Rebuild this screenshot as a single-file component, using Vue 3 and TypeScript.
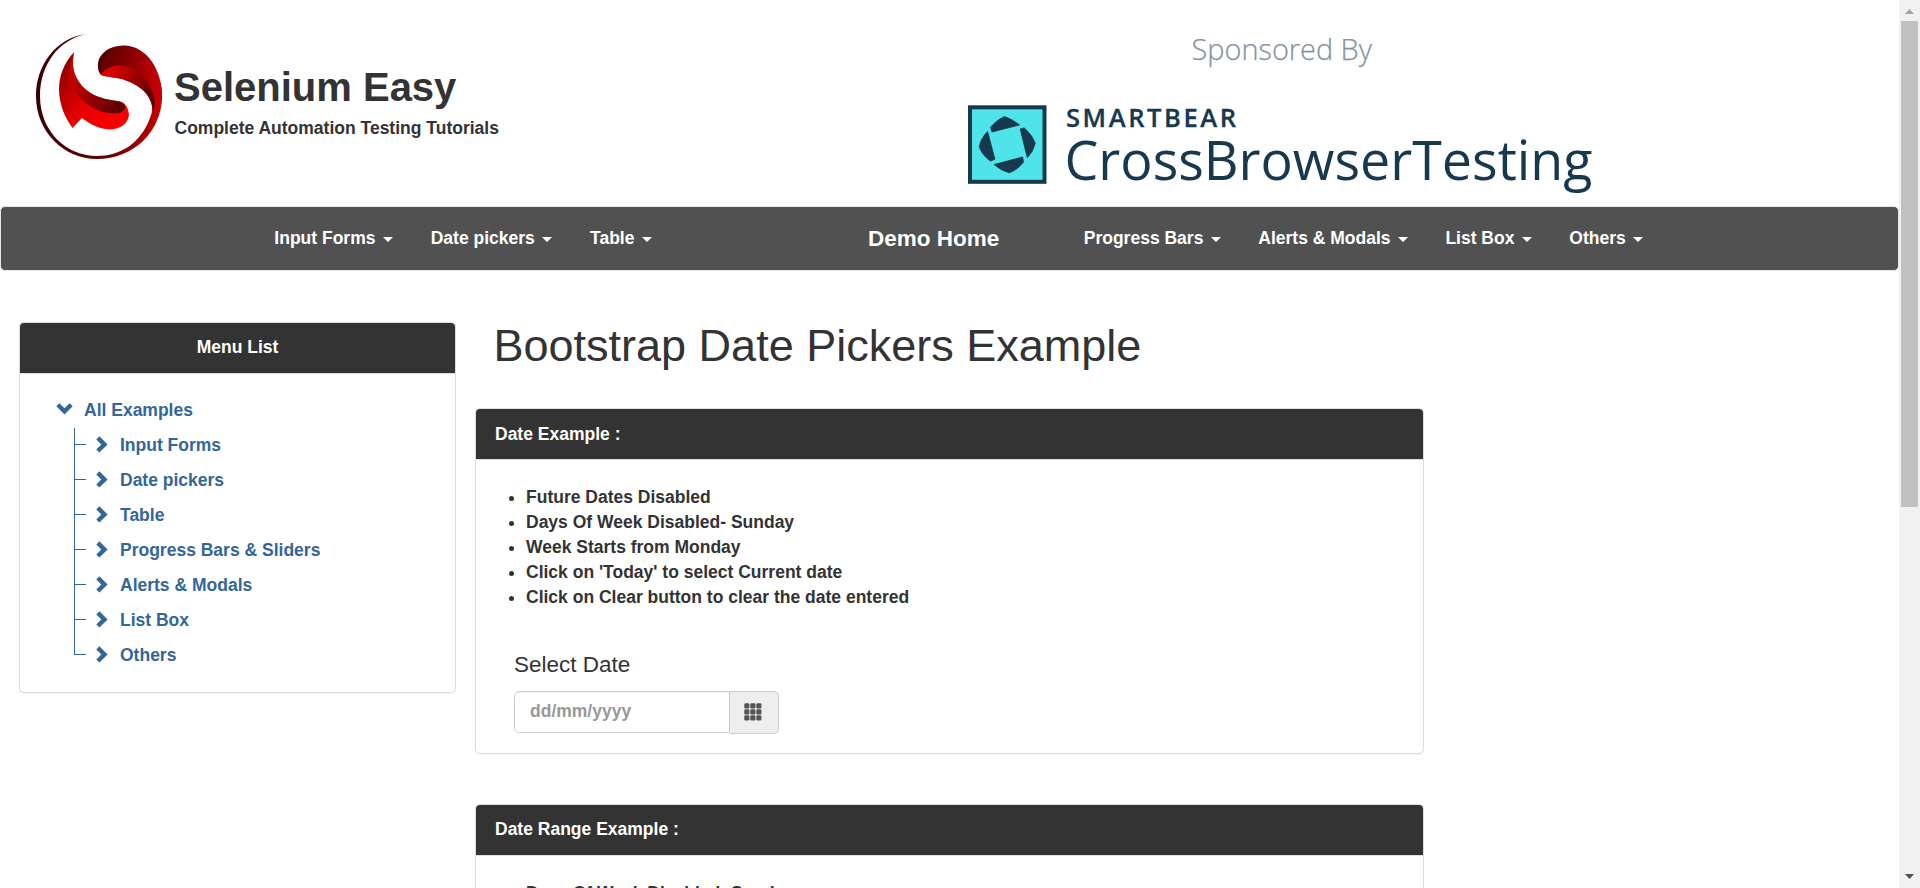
<script setup lang="ts">
interface NavItem { label: string }

const leftNav: NavItem[] = [{ label: 'Input Forms' }, { label: 'Date pickers' }, { label: 'Table' }]
const rightNav: NavItem[] = [{ label: 'Progress Bars' }, { label: 'Alerts & Modals' }, { label: 'List Box' }, { label: 'Others' }]
const tree: string[] = ['Input Forms', 'Date pickers', 'Table', 'Progress Bars & Sliders', 'Alerts & Modals', 'List Box', 'Others']
const dateNotes: string[] = [
  'Future Dates Disabled',
  'Days Of Week Disabled- Sunday',
  'Week Starts from Monday',
  "Click on 'Today' to select Current date",
  'Click on Clear button to clear the date entered',
]
const rangeNotes: string[] = ['Days Of Week Disabled- Sunday']
const cells: number[] = [0, 1, 2]
</script>

<template>
  <div class="window">
    <div class="page">
      <header class="masthead">
        <div class="brand">
          <svg class="brand-logo" width="126" height="126" viewBox="36 34 126 126" aria-hidden="true">
            <defs>
              <linearGradient id="ring" x1="0" y1="0" x2="1" y2="0">
                <stop offset="0" stop-color="#3c0000" />
                <stop offset="0.55" stop-color="#5e0306" />
                <stop offset="1" stop-color="#c80000" />
              </linearGradient>
              <linearGradient id="top" x1="0" y1="0" x2="1" y2="0.3">
                <stop offset="0" stop-color="#4c0000" />
                <stop offset="1" stop-color="#c40004" />
              </linearGradient>
              <linearGradient id="under" x1="0" y1="0" x2="1" y2="0.5">
                <stop offset="0" stop-color="#f00000" />
                <stop offset="0.5" stop-color="#b00000" />
                <stop offset="1" stop-color="#5c0000" />
              </linearGradient>
              <linearGradient id="body" x1="0" y1="0" x2="1" y2="0.6">
                <stop offset="0" stop-color="#7c0000" />
                <stop offset="0.55" stop-color="#e80000" />
                <stop offset="1" stop-color="#f80000" />
              </linearGradient>
              <linearGradient id="fold" x1="0" y1="0" x2="1" y2="0.7">
                <stop offset="0" stop-color="#e00000" />
                <stop offset="0.55" stop-color="#a00000" />
                <stop offset="1" stop-color="#600000" />
              </linearGradient>
            </defs>
            <path fill="url(#ring)" d="M86 34 C56 38 36 65 36 96 C36 132 64 159 97 159 C134 159 162 131 162 96 C162 88 161 82 158 76 L152 96 C155 104 152 114 148 123 C138 144 120 156 97 156 C66 156 40 131 40 96 C40 64 59 40 86 34Z" />
            <path fill="url(#top)" d="M101 75 C97 71 97.5 63 99 59 C104 49 114 45.5 124 45.5 C147 46 162 70 162 96 C162 106 158 114 152 119 C156 95 139 85 122 79 C113 77 107 77 101 75Z" />
            <path fill="url(#under)" d="M101 75 C106 66 117 64.5 125 66 C142 70 154 87 155 104 L153 112 C152 93 139 84 122 79 C113 77 107 77 101 75Z" />
            <path fill="url(#body)" d="M74 52 C64 63 59 76 59 89 C59 104 65 118 72.5 128 L82 118 C90 124 99 129 109 129.5 C120 129.5 128 124 129 115 C128 106 124 101 117 101 C99 99 86 93 79 82 C72.5 73 72 63 74 52Z" />
            <path fill="url(#fold)" d="M74 53 C68 70 69 84 76 93 C87 108 104 115 119 113 C127 111 128 103 117 101 C99 99 86 93 79 82 C72.5 73 72 63 74 53Z" />
          </svg>
          <div class="brand-text">
            <div class="brand-name">Selenium Easy</div>
            <div class="brand-tag">Complete Automation Testing Tutorials</div>
          </div>
        </div>
        <svg class="sponsor" width="640" height="180" viewBox="960 20 640 180" role="img" aria-label="Sponsor">
          <text class="sp-by" x="1191.5" y="59.5" textLength="180.5" lengthAdjust="spacingAndGlyphs">Sponsored By</text>
          <rect x="970" y="107.3" width="74.5" height="74.5" fill="#4fe3ea" stroke="#17384d" stroke-width="4" />
          <g fill="#17384d" stroke="#17384d" stroke-width="0.8" stroke-linejoin="round">
            <path d="M1004.6 116.6 Q1012 119 1019.6 124.9 L992 132 L990.5 127.3 Q997 119.500 1004.600 116.600Z" />
            <path d="M1020.200 129 L1024.200 127.900 Q1032 134.500 1035.200 143.300 Q1033.200 152 1027.300 157.700Z" />
            <path d="M1022.600 157 L1023.500 162 Q1017.500 170 1009.300 172.800 Q1001.500 171 994 164.500Z" />
            <path d="M987.600 131.500 L994.900 159.200 L990.400 161.100 Q982 155 979.200 146.700 Q981 138 987.600 131.500Z" />
          </g>
          <text class="sp-top" x="1066" y="127" textLength="172.500" lengthAdjust="spacingAndGlyphs">SMARTBEAR</text>
          <text class="sp-main" x="1064.500" y="180" textLength="528" lengthAdjust="spacingAndGlyphs">CrossBrowserTesting</text>
        </svg>
      </header>

      <nav class="navbar">
        <div class="nav-left">
          <a v-for="n in leftNav" :key="n.label" class="nav-link">{{ n.label }} <b class="caret"></b></a>
        </div>
        <a class="nav-home">Demo Home</a>
        <div class="nav-right">
          <a v-for="n in rightNav" :key="n.label" class="nav-link">{{ n.label }} <b class="caret"></b></a>
        </div>
      </nav>

      <div class="columns">
        <aside class="panel side">
          <div class="panel-head centered">Menu List</div>
          <div class="tree">
            <div class="tree-root">
              <svg class="chev-down" width="17" height="12" viewBox="0 0 17 12"><path d="M3.400 0.300 L8.500 5.200 L13.600 0.300 L16.700 3.300 L8.500 11.500 L0.300 3.300Z" fill="#369" /></svg>
              <span>All Examples</span>
            </div>
            <ul class="tree-list">
              <li v-for="t in tree" :key="t" class="tree-item">
                <svg class="chev-right" width="12" height="17" viewBox="0 0 12 17"><path d="M3.400 0.300 L11.600 8.400 L3.400 16.500 L0.300 13.400 L5.300 8.400 L0.300 3.400Z" fill="#369" /></svg>
                <span>{{ t }}</span>
              </li>
            </ul>
          </div>
        </aside>

        <main class="main">
          <h1>Bootstrap Date Pickers Example</h1>
          <section class="panel first">
            <div class="panel-head">Date Example :</div>
            <ul class="notes">
              <li v-for="n in dateNotes" :key="n">{{ n }}</li>
            </ul>
            <div class="field">
              <label>Select Date</label>
              <div class="group">
                <input type="text" placeholder="dd/mm/yyyy" />
                <span class="addon">
                  <svg width="18" height="18" viewBox="0 0 18 18" fill="#555">
                    <template v-for="r in cells" :key="r">
                      <rect v-for="c in cells" :key="c" :x="0.3 + c * 6" :y="0.2 + r * 6" width="5.1" height="5.3" rx="1.2" />
                    </template>
                  </svg>
                </span>
              </div>
            </div>
          </section>
          <section class="panel">
            <div class="panel-head">Date Range Example :</div>
            <ul class="notes">
              <li v-for="n in rangeNotes" :key="n">{{ n }}</li>
            </ul>
          </section>
        </main>
      </div>
    </div>

    <div class="scrollbar">
      <svg width="21" height="21" viewBox="0 0 21 21"><path d="M6 14 L10.5 9 L15 14Z" fill="#a3a3a3" /></svg>
      <div class="thumb"></div>
      <svg width="21" height="21" viewBox="0 0 21 21"><path d="M6 7 L15 7 L10.5 12Z" fill="#505050" /></svg>
    </div>
  </div>
</template>

<style>
html, body { margin: 0; overflow: hidden; background: #fff; }
</style>

<style scoped>
* { box-sizing: border-box; }
.window {
  display: flex;
  width: 1920px;
  height: 888px;
  overflow: hidden;
  background: #fff;
  font: bold 17.5px/25px "Liberation Sans", Arial, sans-serif;
  color: #333;
}
.page { width: 1899px; height: 888px; overflow: hidden; }
.masthead { display: flex; height: 206px; }
.brand { display: flex; width: 960px; padding: 34px 0 0 36px; }
.brand-logo { flex: none; }
.brand-text { padding: 30px 0 0 12px; white-space: nowrap; }
.brand-name { font-size: 40px; line-height: 46px; }
.brand-tag { margin-top: 6px; padding-left: 0.5px; }
.sponsor { margin-top: 20px; font-family: "Open Sans", sans-serif; }
.sp-by { font-size: 30px; font-weight: 300; fill: #8593a1; stroke: #8593a1; stroke-width: 0.25px; }
.sp-top { font-size: 25px; font-weight: 600; letter-spacing: 2.5px; fill: #17384d; stroke: #17384d; stroke-width: 0.3px; }
.sp-main { font-size: 55.6px; font-weight: 400; fill: #17384d; }
.navbar {
  display: grid;
  grid-template-columns: 812px 252px 1fr;
  height: 65px;
  background: #515151;
  border: 1px solid #e7e7e7;
  border-radius: 5px;
  color: #fff;
  white-space: nowrap;
}
.nav-left { display: flex; gap: 0.4px; padding-left: 254.6px; }
.nav-right { display: flex; }
.nav-link { padding: 19px 18.75px; }
.nav-home { padding: 19px 0 0 55px; font-size: 22.5px; }
.caret {
  display: inline-block;
  margin-left: 2.5px;
  vertical-align: middle;
  border-top: 5px solid #fff;
  border-left: 5px solid transparent;
  border-right: 5px solid transparent;
}
.columns { display: flex; align-items: flex-start; padding: 51px 0 0 19px; }
.panel {
  background: #fff;
  border: 1px solid #ddd;
  border-radius: 5px;
  box-shadow: 0 1px 1px rgba(0, 0, 0, .05);
}
.panel-head {
  height: 51px;
  padding: 12px 19px 0;
  background: #333;
  border-bottom: 1px solid #ddd;
  border-radius: 4px 4px 0 0;
  color: #fff;
}
.first .panel-head { padding-top: 13px; }
.centered { text-align: center; }
.side { width: 437px; height: 371px; }
.tree { padding: 24px 0 0 36px; color: #369; }
.tree-root { display: flex; align-items: center; height: 25px; }
.chev-down { margin: -4px 11px 0 0; }
.tree-list { list-style: none; margin: 5px 0 0 18px; padding: 0; }
.tree-item {
  position: relative;
  display: flex;
  align-items: center;
  height: 35px;
  padding-left: 22px;
}
.tree-item::before {
  content: "";
  position: absolute;
  left: 0;
  top: 0;
  width: 1px;
  height: 100%;
  background: #369;
}
.tree-item:last-child::before { height: 17px; }
.tree-item::after {
  content: "";
  position: absolute;
  left: 0;
  top: 16px;
  width: 12px;
  height: 1px;
  background: #369;
}
.chev-right { margin: -2px 12px 0 0; }
.main { width: 949px; margin-left: 19px; }
h1 { margin: -1px 0 0; padding-left: 18.5px; font-size: 45px; font-weight: 400; line-height: 50px; white-space: nowrap; }
.main .panel { margin-top: 37px; height: 346px; }
.main .panel + .panel { margin-top: 50px; }
.notes { margin: 0; padding: 24.5px 0 0 50px; }
.field { padding: 41px 0 0 38px; }
.field label { display: block; font-size: 22.5px; font-weight: 400; line-height: 28px; }
.group { display: flex; align-items: flex-start; margin-top: 12px; }
input {
  width: 216px;
  height: 42px;
  padding: 0 15px;
  border: 1px solid #ccc;
  border-radius: 5px 0 0 5px;
  background: #fff;
  box-shadow: inset 0 1px 1px rgba(0, 0, 0, .075);
  font: inherit;
}
input::placeholder { color: #999; opacity: 1; }
.addon {
  display: flex;
  align-items: center;
  justify-content: center;
  width: 49px;
  height: 43px;
  padding: 0 2px 1px 0;
  border: 1px solid #ccc;
  border-left: 0;
  border-radius: 0 5px 5px 0;
  background: #eee;
}
.scrollbar { display: flex; flex-direction: column; width: 21px; background: #f1f1f1; }
.scrollbar svg { flex: none; display: block; }
.thumb { width: 17px; height: 486px; margin: 0 2px auto; background: #c1c1c1; }
</style>
